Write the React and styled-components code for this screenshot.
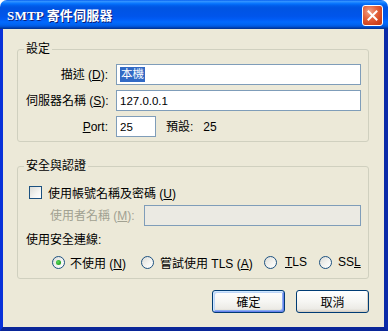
import styled, { createGlobalStyle } from "styled-components";

const GlobalStyle = createGlobalStyle`
  html, body {
    margin: 0;
    padding: 0;
    background: #ffffff;
  }
  body {
    font-family: "Liberation Sans", "Noto Sans CJK TC", sans-serif;
    font-size: 12px;
    color: #000000;
  }
`;

const Window = styled.div`
  width: 388px;
  height: 331px;
  display: flex;
  flex-direction: column;
  box-sizing: border-box;
`;

const TitleBar = styled.div`
  height: 29px;
  flex: none;
  display: flex;
  align-items: center;
  justify-content: space-between;
  padding: 0 5px 0 7px;
  border-radius: 7px 7px 0 0;
  background: linear-gradient(
    to bottom,
    #0058ee 0%,
    #3593ff 4%,
    #288eff 7%,
    #127dff 10%,
    #036ffc 14%,
    #0262ee 18%,
    #0057e5 24%,
    #0054e3 30%,
    #0055eb 56%,
    #005bf5 66%,
    #026afe 76%,
    #0062ef 86%,
    #0052d6 92%,
    #0040ab 96%,
    #003092 100%
  );
`;

const Title = styled.div`
  color: #ffffff;
  font-family: "Liberation Serif", "Noto Sans CJK TC", serif;
  font-weight: bold;
  font-size: 13px;
  letter-spacing: 0.2px;
  text-shadow: 1px 1px 0 #0a1e7a;
`;

const CloseButton = styled.div`
  width: 19px;
  height: 19px;
  border: 1px solid #ffffff;
  border-radius: 3px;
  display: flex;
  align-items: center;
  justify-content: center;
  background: radial-gradient(circle at 35% 30%, #f0a38a 0%, #e4633d 40%, #d0421c 75%, #c23a14 100%);
  margin-top: 1px;
`;

const Body = styled.div`
  flex: 1;
  display: flex;
  flex-direction: column;
  background: #ece9d8;
  border-left: 3px solid #0831d9;
  border-right: 4px solid #0a2aa8;
  border-bottom: 4px solid #0a2698;
  padding: 13px 15px 0 14px;
`;

const Group = styled.fieldset`
  margin: ${(p) => (p.$first ? "0" : "17px 0 0 0")};
  padding: ${(p) => p.$pad};
  border: 1px solid #d0d0bf;
  border-radius: 3px;
  min-width: 0;
`;

const Legend = styled.legend`
  padding: 0 2px;
  margin-left: -2px;
  line-height: 14px;
  color: #000000;
`;

const FormGrid = styled.div`
  display: grid;
  grid-template-columns: 82px 1fr;
  column-gap: 8px;
  row-gap: 5px;
  align-items: center;
`;

const Label = styled.div`
  text-align: ${(p) => (p.$left ? "left" : "right")};
  color: ${(p) => (p.$disabled ? "#a1a192" : "#000000")};
  line-height: 14px;
  white-space: nowrap;
`;

const Field = styled.div`
  height: 21px;
  box-sizing: border-box;
  border: 1px solid #7f9db9;
  background: ${(p) => (p.$disabled ? "#ebeae3" : "#ffffff")};
  width: ${(p) => p.$width || "auto"};
  display: flex;
  align-items: center;
  padding-left: 3px;
  font-size: 11.5px;
  white-space: nowrap;
`;

const Selected = styled.span`
  background: #316ac5;
  color: #ffffff;
  line-height: 15px;
  padding: 0 1px;
`;

const PortRow = styled.div`
  display: flex;
  align-items: center;
`;

const Hint = styled.span`
  margin-left: ${(p) => p.$gap};
  line-height: 14px;
`;

const CheckRow = styled.label`
  display: flex;
  align-items: center;
  gap: 6px;
  margin-left: 3px;
  height: 17px;
`;

const CheckBox = styled.span`
  width: 11px;
  height: 11px;
  border: 1px solid #1c5180;
  background: linear-gradient(135deg, #dcdcd7 0%, #f5f5f2 60%, #ffffff 100%);
`;

const UserRow = styled.div`
  display: flex;
  align-items: center;
  margin-top: 4px;
  padding-left: 24px;
  gap: 9px;
`;

const Caption = styled.div`
  margin-top: 7px;
  line-height: 14px;
`;

const RadioRow = styled.div`
  display: flex;
  align-items: center;
  margin-top: 8px;
  padding-left: 26px;
  height: 14px;
`;

const RadioItem = styled.label`
  display: flex;
  align-items: center;
  gap: ${(p) => p.$gap || "6px"};
  width: ${(p) => p.$width || "auto"};
  flex: none;
  white-space: nowrap;
`;

const Radio = styled.span`
  width: 11px;
  height: 11px;
  border: 1px solid #1c5180;
  border-radius: 50%;
  display: flex;
  align-items: center;
  justify-content: center;
  background: linear-gradient(135deg, #dcdcd7 0%, #f5f5f2 60%, #ffffff 100%);
  &::after {
    content: "";
    display: ${(p) => (p.$checked ? "block" : "none")};
    width: 5px;
    height: 5px;
    border-radius: 50%;
    background: radial-gradient(circle at 40% 40%, #5edb5e 0%, #21a121 70%);
  }
`;

const Buttons = styled.div`
  display: flex;
  justify-content: flex-end;
  gap: 11px;
  margin-top: 11px;
`;

const Button = styled.div`
  width: 73px;
  height: 23px;
  box-sizing: border-box;
  border: 1px solid #003c74;
  border-radius: 3px;
  display: flex;
  align-items: center;
  justify-content: center;
  background: linear-gradient(to bottom, #ffffff 0%, #f6f6f3 50%, #ecebe6 85%, #d6d0c5 100%);
  box-shadow: ${(p) =>
    p.$default
      ? "inset 1px 1px 0 #cee7ff, inset -1px -1px 0 #6982ee, inset 2px 2px 0 #bcd4f6, inset -2px -2px 0 #89adf0"
      : "inset -1px -1px 0 #d6d0c5"};
`;

export default function App() {
  return (
    <>
      <GlobalStyle />
      <Window>
        <TitleBar>
          <Title>SMTP 寄件伺服器</Title>
          <CloseButton>
            <svg width="11" height="11" viewBox="0 0 11 11">
              <path d="M1.5 1.5 L9.5 9.5 M9.5 1.5 L1.5 9.5" stroke="#ffffff" strokeWidth="2" strokeLinecap="square" />
            </svg>
          </CloseButton>
        </TitleBar>
        <Body>
          <Group $first $pad="8px 7px 4px 8px">
            <Legend>設定</Legend>
            <FormGrid>
              <Label>描述 (<u>D</u>):</Label>
              <Field>
                <Selected>本機</Selected>
              </Field>
              <Label>伺服器名稱 (<u>S</u>):</Label>
              <Field>127.0.0.1</Field>
              <Label>
                <u>P</u>ort:
              </Label>
              <PortRow>
                <Field $width="40px">25</Field>
                <Hint $gap="10px">預設:</Hint>
                <Hint $gap="10px">25</Hint>
              </PortRow>
            </FormGrid>
          </Group>
          <Group $pad="11px 7px 9px 8px">
            <Legend>安全與認證</Legend>
            <CheckRow>
              <CheckBox />
              <span>
                使用帳號名稱及密碼 (<u>U</u>)
              </span>
            </CheckRow>
            <UserRow>
              <Label $left $disabled>
                使用者名稱 (<u>M</u>):
              </Label>
              <Field $disabled $width="218px" />
            </UserRow>
            <Caption>使用安全連線:</Caption>
            <RadioRow>
              <RadioItem $width="89px" $gap="5px">
                <Radio $checked />
                <span>
                  不使用 (<u>N</u>)
                </span>
              </RadioItem>
              <RadioItem $width="123px">
                <Radio />
                <span>
                  嘗試使用 TLS (<u>A</u>)
                </span>
              </RadioItem>
              <RadioItem $width="55px" $gap="8px">
                <Radio />
                <span>
                  <u>T</u>LS
                </span>
              </RadioItem>
              <RadioItem>
                <Radio />
                <span>
                  SS<u>L</u>
                </span>
              </RadioItem>
            </RadioRow>
          </Group>
          <Buttons>
            <Button $default>確定</Button>
            <Button>取消</Button>
          </Buttons>
        </Body>
      </Window>
    </>
  );
}
